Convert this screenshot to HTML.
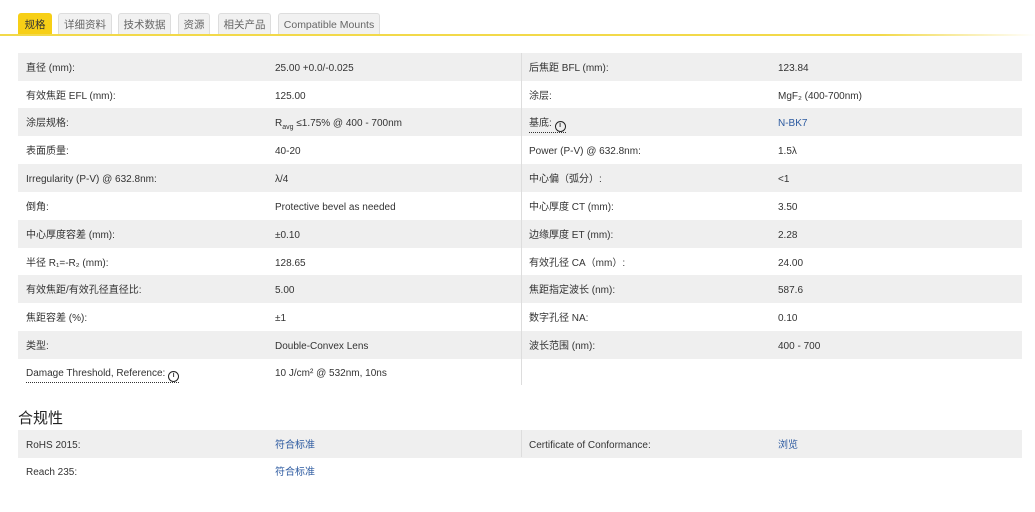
<!DOCTYPE html>
<html><head><meta charset="utf-8"><style>
*{margin:0;padding:0;box-sizing:border-box}
body{width:1035px;height:512px;background:#fff;font-family:"Liberation Sans","Noto Sans CJK SC",sans-serif;font-size:10px;color:#333;position:relative;overflow:hidden}
.tab{position:absolute;top:13px;height:22px;background:#f1f1f1;border:1px solid #ddd;border-bottom:none;border-radius:3px 3px 0 0;color:#666;font-size:10.5px;line-height:23px;text-align:center}
.tab.a{background:#f7cf16;border-color:#f7cf16;color:#333}
.line{position:absolute;left:0;top:34px;width:1035px;height:2px;background:linear-gradient(to right,#f2d94a 0,#f2d94a 85%,#fff 100%)}
.row{position:absolute;left:18px;width:1004px;height:28px}
.g{background:#efefef}
.c{position:absolute;top:0;line-height:31px;white-space:nowrap}
.div{position:absolute;left:521px;top:53px;width:1px;height:332px;background:#ddd}
.l{color:#2c5aa0}
.u{border-bottom:1px dotted #333;line-height:14px;top:9px}
.i{display:inline-block;width:11px;height:11px;border:1.5px solid #222;border-radius:50%;font-size:7px;line-height:8px;text-align:center;font-weight:bold;vertical-align:-1px}
h3{position:absolute;left:18px;top:407px;font-size:15px;font-weight:normal;color:#222}
</style></head><body>
<div class="tab a" style="left:18px;width:34px">规格</div>
<div class="tab" style="left:58px;width:54px">详细资料</div>
<div class="tab" style="left:118px;width:53px">技术数据</div>
<div class="tab" style="left:178px;width:32px">资源</div>
<div class="tab" style="left:218px;width:53px">相关产品</div>
<div class="tab" style="left:278px;width:102px">Compatible Mounts</div>
<div class="line"></div>

<div class="row g" style="top:53px"><span class="c" style="left:8px">直径 (mm):</span><span class="c" style="left:257px">25.00 +0.0/-0.025</span><span class="c" style="left:511px">后焦距 BFL (mm):</span><span class="c" style="left:760px">123.84</span></div>
<div class="row" style="top:81px"><span class="c" style="left:8px">有效焦距 EFL (mm):</span><span class="c" style="left:257px">125.00</span><span class="c" style="left:511px">涂层:</span><span class="c" style="left:760px">MgF₂ (400-700nm)</span></div>
<div class="row g" style="top:108px"><span class="c" style="left:8px">涂层规格:</span><span class="c" style="left:257px">R<sub style="font-size:7px">avg</sub> ≤1.75% @ 400 - 700nm</span><span class="c u" style="left:511px">基底: <span class="i">i</span></span><span class="c l" style="left:760px">N-BK7</span></div>
<div class="row" style="top:136px"><span class="c" style="left:8px">表面质量:</span><span class="c" style="left:257px">40-20</span><span class="c" style="left:511px">Power (P-V) @ 632.8nm:</span><span class="c" style="left:760px">1.5λ</span></div>
<div class="row g" style="top:164px"><span class="c" style="left:8px">Irregularity (P-V) @ 632.8nm:</span><span class="c" style="left:257px">λ/4</span><span class="c" style="left:511px">中心偏（弧分）:</span><span class="c" style="left:760px">&lt;1</span></div>
<div class="row" style="top:192px"><span class="c" style="left:8px">倒角:</span><span class="c" style="left:257px">Protective bevel as needed</span><span class="c" style="left:511px">中心厚度 CT (mm):</span><span class="c" style="left:760px">3.50</span></div>
<div class="row g" style="top:220px"><span class="c" style="left:8px">中心厚度容差 (mm):</span><span class="c" style="left:257px">±0.10</span><span class="c" style="left:511px">边缘厚度 ET (mm):</span><span class="c" style="left:760px">2.28</span></div>
<div class="row" style="top:248px"><span class="c" style="left:8px">半径 R₁=-R₂ (mm):</span><span class="c" style="left:257px">128.65</span><span class="c" style="left:511px">有效孔径 CA（mm）:</span><span class="c" style="left:760px">24.00</span></div>
<div class="row g" style="top:275px"><span class="c" style="left:8px">有效焦距/有效孔径直径比:</span><span class="c" style="left:257px">5.00</span><span class="c" style="left:511px">焦距指定波长 (nm):</span><span class="c" style="left:760px">587.6</span></div>
<div class="row" style="top:303px"><span class="c" style="left:8px">焦距容差 (%):</span><span class="c" style="left:257px">±1</span><span class="c" style="left:511px">数字孔径 NA:</span><span class="c" style="left:760px">0.10</span></div>
<div class="row g" style="top:331px"><span class="c" style="left:8px">类型:</span><span class="c" style="left:257px">Double-Convex Lens</span><span class="c" style="left:511px">波长范围 (nm):</span><span class="c" style="left:760px">400 - 700</span></div>
<div class="row" style="top:358px"><span class="c u" style="left:8px">Damage Threshold, Reference: <span class="i">i</span></span><span class="c" style="left:257px">10 J/cm² @ 532nm, 10ns</span></div>
<div class="div"></div>

<h3>合规性</h3>
<div class="row g" style="top:430px"><span class="c" style="left:8px">RoHS 2015:</span><span class="c l" style="left:257px">符合标准</span><span class="c" style="left:511px">Certificate of Conformance:</span><span class="c l" style="left:760px">浏览</span></div>
<div class="row" style="top:457px"><span class="c" style="left:8px">Reach 235:</span><span class="c l" style="left:257px">符合标准</span></div>
<div style="position:absolute;left:521px;top:430px;width:1px;height:27px;background:#ddd"></div>
</body></html>
